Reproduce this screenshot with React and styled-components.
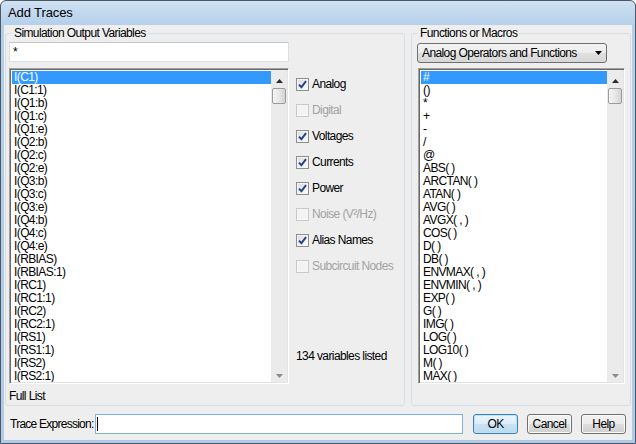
import React from "react";
import styled, { createGlobalStyle } from "styled-components";

const GlobalStyle = createGlobalStyle`
  html, body { margin: 0; padding: 0; background: #ffffff; }
  body { font-family: "Liberation Sans", Arial, sans-serif; }
  * { box-sizing: border-box; }
`;

const Window = styled.div`
  width: 636px;
  height: 444px;
  display: flex;
  flex-direction: column;
  border: 1px solid #4e5864;
  border-radius: 6px 6px 0 0;
  padding: 0 3px 3px;
  background: linear-gradient(#d0e1f3 0px, #b5cfea 24px, #aecbe9 100%);
  overflow: hidden;
`;

const TitleBar = styled.div`
  height: 24px;
  flex: none;
  display: flex;
  align-items: center;
  padding: 0 0 1px 4px;
  font-size: 13px;
  letter-spacing: -0.1px;
  color: #000;
`;

const Content = styled.div`
  flex: 1;
  display: flex;
  flex-direction: column;
  background: #eeeeee;
  padding: 2px 1px 0;
  font-family: "Liberation Sans", Arial, sans-serif;
  font-size: 12px;
  letter-spacing: -0.6px;
  color: #000;
`;

const TopRow = styled.div`
  height: 379px;
  display: flex;
  gap: 6px;
`;

const Group = styled.fieldset`
  margin: 0;
  min-width: 0;
  width: ${(p) => p.$w}px;
  border: 1px solid #d5dfe5;
  border-radius: 3px;
  padding: 2px ${(p) => p.$pr}px 2px ${(p) => p.$pl}px;
  display: flex;
  flex-direction: column;
`;

const Legend = styled.legend`
  padding: 0 2px;
  margin-left: ${(p) => p.$ml}px;
  line-height: 13px;
`;

const FilterBox = styled.div`
  width: 280px;
  height: 20px;
  flex: none;
  background: #fff;
  border: 1px solid #dcdfe3;
  border-top-color: #c4c7cc;
  padding-left: 3px;
  display: flex;
  align-items: center;
  line-height: 13px;
`;

const MiddleRow = styled.div`
  display: flex;
  margin-top: ${(p) => p.$mt}px;
`;

const ListBox = styled.div`
  width: ${(p) => p.$w}px;
  height: 316px;
  flex: none;
  display: flex;
  background: #fff;
  border: 1px solid;
  border-color: #a0a0a0 #ffffff #ffffff #a0a0a0;
  box-shadow: inset 1px 1px 0 #696969, inset -1px -1px 0 #e3e3e3;
  padding: 1px;
  margin-left: ${(p) => p.$ml || 0}px;
`;

const Items = styled.div`
  flex: 1;
  overflow: hidden;
  padding: 1px 0 0 1px;
`;

const Item = styled.div`
  height: 13px;
  line-height: 13px;
  padding-left: 2px;
  white-space: pre;
  background: ${(p) => (p.$sel ? "#3399ff" : "transparent")};
  color: ${(p) => (p.$sel ? "#ffffff" : "#000000")};
`;

const ScrollBar = styled.div`
  width: 16px;
  flex: none;
  display: flex;
  flex-direction: column;
  background: #ebebeb;
`;

const ArrowBtn = styled.div`
  height: 18px;
  flex: none;
  display: flex;
  justify-content: center;
  align-items: flex-start;
  padding-top: ${(p) => p.$top}px;
`;

const Thumb = styled.div`
  width: 14px;
  height: 16px;
  margin-left: 1px;
  border: 1px solid #9b9b9b;
  border-radius: 2px;
  background: linear-gradient(90deg, #f6f6f6, #e3e3e3 60%, #d2d2d2);
`;

const Track = styled.div`
  flex: 1;
`;

const OptionCol = styled.div`
  flex: 1;
  margin-left: 7px;
  padding-top: 3px;
  display: flex;
  flex-direction: column;
`;

const OptionRow = styled.div`
  height: 26px;
  display: flex;
  align-items: center;
  white-space: nowrap;
  color: ${(p) => (p.$disabled ? "#a3a3a3" : "#000")};
`;

const CheckBox = styled.span`
  width: 13px;
  height: 13px;
  flex: none;
  display: flex;
  align-items: center;
  justify-content: center;
  border: 1px solid ${(p) => (p.$disabled ? "#c9c9c9" : "#8e8f8f")};
  background: ${(p) =>
    p.$disabled
      ? "#f3f3f3"
      : "linear-gradient(135deg, #d6d8dc 0%, #eef0f2 55%, #ffffff 100%)"};
  box-shadow: inset 0 0 0 1px ${(p) => (p.$disabled ? "#f7f7f7" : "#f4f4f4")};
  margin-right: 3px;
`;

const Count = styled.div`
  margin-top: auto;
  margin-bottom: 21px;
  line-height: 13px;
  white-space: nowrap;
`;

const FooterLabel = styled.div`
  margin-top: 6px;
  line-height: 13px;
`;

const Select = styled.div`
  width: 190px;
  height: 20px;
  flex: none;
  margin-top: 1px;
  border: 1px solid #707070;
  border-radius: 3px;
  background: linear-gradient(#f3f3f3 0%, #ececec 50%, #e0e0e0 51%, #d6d6d6 100%);
  display: flex;
  align-items: center;
  justify-content: space-between;
  padding: 0 4px 0 4px;
  line-height: 13px;
  white-space: nowrap;
`;

const BottomRow = styled.div`
  flex: 1;
  display: flex;
  align-items: center;
  padding: 1px 5px 0 5px;
`;

const FieldLabel = styled.span`
  flex: 1;
  white-space: nowrap;
  letter-spacing: -0.75px;
`;

const TextBox = styled.div`
  width: 368px;
  height: 20px;
  flex: none;
  background: #fff;
  border: 1px solid #7fb3e6;
  display: flex;
  align-items: center;
  padding-left: 1px;
`;

const Caret = styled.span`
  width: 1px;
  height: 14px;
  background: #000;
`;

const Buttons = styled.div`
  display: flex;
  flex: none;
  gap: 9px;
  margin-left: 10px;
`;

const Button = styled.button`
  width: 45px;
  height: 20px;
  padding: 0;
  font-family: inherit;
  font-size: inherit;
  letter-spacing: inherit;
  color: #000;
  border-radius: 3px;
  border: 1px solid ${(p) => (p.$default ? "#3c7fb1" : "#707070")};
  box-shadow: inset 0 0 0 1px ${(p) => (p.$default ? "#bfe3f7" : "#fbfbfb")};
  background: ${(p) =>
    p.$default
      ? "linear-gradient(#eaf5fc 0%, #dcedf8 50%, #c9e3f4 51%, #bcdaf0 100%)"
      : "linear-gradient(#f2f2f2 0%, #ebebeb 50%, #dddddd 51%, #cfcfcf 100%)"};
`;

const Tri = ({ dir, color }) => (
  <svg width="7" height="4" viewBox="0 0 7 4">
    <path d={dir === "up" ? "M0 4 L3.5 0 L7 4 Z" : "M0 0 L7 0 L3.5 4 Z"} fill={color} />
  </svg>
);

const Check = () => (
  <svg width="9" height="9" viewBox="0 0 9 9">
    <path d="M1 4.6 L3.4 7.2 L8 1.2" fill="none" stroke="#24408a" strokeWidth="1.9" />
  </svg>
);

const Scroll = () => (
  <ScrollBar>
    <ArrowBtn $top={9}>
      <Tri dir="up" color="#2a2a2a" />
    </ArrowBtn>
    <Thumb />
    <Track />
    <ArrowBtn $top={10}>
      <Tri dir="down" color="#8a8a8a" />
    </ArrowBtn>
  </ScrollBar>
);

const variables = [
  "I(C1)", "I(C1:1)", "I(Q1:b)", "I(Q1:c)", "I(Q1:e)", "I(Q2:b)", "I(Q2:c)", "I(Q2:e)",
  "I(Q3:b)", "I(Q3:c)", "I(Q3:e)", "I(Q4:b)", "I(Q4:c)", "I(Q4:e)", "I(RBIAS)", "I(RBIAS:1)",
  "I(RC1)", "I(RC1:1)", "I(RC2)", "I(RC2:1)", "I(RS1)", "I(RS1:1)", "I(RS2)", "I(RS2:1)",
];

const functions = [
  "#", "()", "*", "+", "-", "/", "@", "ABS( )", "ARCTAN( )", "ATAN( )", "AVG( )", "AVGX( , )",
  "COS( )", "D( )", "DB( )", "ENVMAX( , )", "ENVMIN( , )", "EXP( )", "G( )", "IMG( )",
  "LOG( )", "LOG10( )", "M( )", "MAX( )",
];

const options = [
  { label: "Analog", checked: true },
  { label: "Digital", disabled: true },
  { label: "Voltages", checked: true },
  { label: "Currents", checked: true },
  { label: "Power", checked: true },
  { label: "Noise (V²/Hz)", disabled: true },
  { label: "Alias Names", checked: true },
  { label: "Subcircuit Nodes", disabled: true },
];

export default function App() {
  return (
    <>
      <GlobalStyle />
      <Window>
        <TitleBar>Add Traces</TitleBar>
        <Content>
          <TopRow>
            <Group $w={400} $pl={3} $pr={3}>
              <Legend $ml={3}>Simulation Output Variables</Legend>
              <FilterBox>*</FilterBox>
              <MiddleRow $mt={6}>
                <ListBox $w={280}>
                  <Items>
                    {variables.map((v, i) => (
                      <Item key={v} $sel={i === 0}>{v}</Item>
                    ))}
                  </Items>
                  <Scroll />
                </ListBox>
                <OptionCol>
                  {options.map((o) => (
                    <OptionRow key={o.label} $disabled={o.disabled}>
                      <CheckBox $disabled={o.disabled}>{o.checked && <Check />}</CheckBox>
                      {o.label}
                    </OptionRow>
                  ))}
                  <Count>134 variables listed</Count>
                </OptionCol>
              </MiddleRow>
              <FooterLabel>Full List</FooterLabel>
            </Group>
            <Group $w={220} $pl={5} $pr={5}>
              <Legend $ml={1}>Functions or Macros</Legend>
              <Select>
                <span>Analog Operators and Functions</span>
                <Tri dir="down" color="#000" />
              </Select>
              <MiddleRow $mt={5}>
                <ListBox $w={207} $ml={1}>
                  <Items>
                    {functions.map((f, i) => (
                      <Item key={f} $sel={i === 0}>{f}</Item>
                    ))}
                  </Items>
                  <Scroll />
                </ListBox>
              </MiddleRow>
            </Group>
          </TopRow>
          <BottomRow>
            <FieldLabel>Trace Expression:</FieldLabel>
            <TextBox>
              <Caret />
            </TextBox>
            <Buttons>
              <Button $default>OK</Button>
              <Button>Cancel</Button>
              <Button>Help</Button>
            </Buttons>
          </BottomRow>
        </Content>
      </Window>
    </>
  );
}
